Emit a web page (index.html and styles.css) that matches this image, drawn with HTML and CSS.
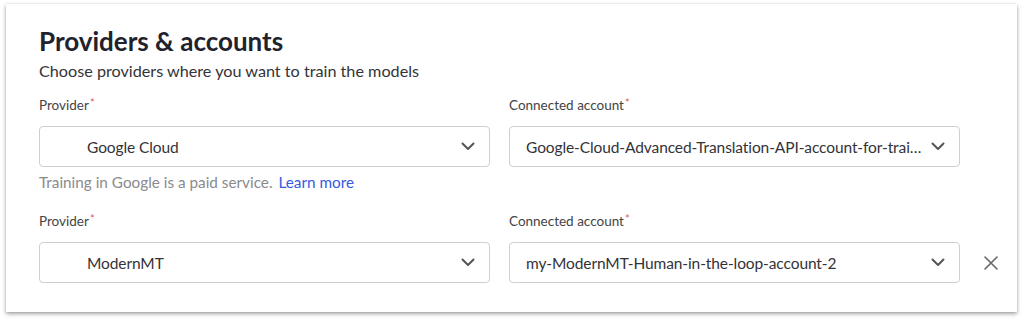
FILE: index.html
```html
<!DOCTYPE html>
<html>
<head>
    <meta charset="utf-8">
    <link rel="stylesheet" href="styles.css">
</head>
<body>
    <div class="card">
        <h1 class="title">Providers &amp; accounts</h1>
        <p class="subtitle">Choose providers where you want to train the models</p>

        <div class="rows">
            <div class="row">
                <div class="field">
                    <label class="label">Provider<span class="req">*</span></label>
                    <div class="select select-provider">
                        <span class="value">Google Cloud</span>
                        <svg class="chevron" width="14" height="9" viewBox="0 0 14 9"><path d="M1.5 1.5 L7 7 L12.5 1.5" fill="none" stroke="#555" stroke-width="2" stroke-linecap="round" stroke-linejoin="round"/></svg>
                    </div>
                    <div class="hint">Training in Google is a paid service. <a class="link" href="#">Learn more</a></div>
                </div>
                <div class="field">
                    <label class="label">Connected account<span class="req">*</span></label>
                    <div class="select">
                        <span class="value">Google-Cloud-Advanced-Translation-API-account-for-training-models</span>
                        <svg class="chevron" width="14" height="9" viewBox="0 0 14 9"><path d="M1.5 1.5 L7 7 L12.5 1.5" fill="none" stroke="#555" stroke-width="2" stroke-linecap="round" stroke-linejoin="round"/></svg>
                    </div>
                </div>
                <div class="remove"></div>
            </div>

            <div class="row">
                <div class="field">
                    <label class="label">Provider<span class="req">*</span></label>
                    <div class="select select-provider">
                        <span class="value">ModernMT</span>
                        <svg class="chevron" width="14" height="9" viewBox="0 0 14 9"><path d="M1.5 1.5 L7 7 L12.5 1.5" fill="none" stroke="#555" stroke-width="2" stroke-linecap="round" stroke-linejoin="round"/></svg>
                    </div>
                </div>
                <div class="field">
                    <label class="label">Connected account<span class="req">*</span></label>
                    <div class="select">
                        <span class="value">my-ModernMT-Human-in-the-loop-account-2</span>
                        <svg class="chevron" width="14" height="9" viewBox="0 0 14 9"><path d="M1.5 1.5 L7 7 L12.5 1.5" fill="none" stroke="#555" stroke-width="2" stroke-linecap="round" stroke-linejoin="round"/></svg>
                    </div>
                </div>
                <div class="remove">
                    <svg width="14" height="14" viewBox="0 0 14 14"><path d="M1 1 L13 13 M13 1 L1 13" stroke="#666" stroke-width="1.6" stroke-linecap="round"/></svg>
                </div>
            </div>
        </div>
    </div>
</body>
</html>
```

FILE: styles.css
```css
:root {
    --radius: 4px;
    --border: #cfcfd3;
    --text: #333338;
}

html, body {
    height: 321px;
}

body {
    margin: 0;
    padding-top: 4px;
    box-sizing: border-box;
    background-color: white;
    font-family: Lato, "Open Sans", sans-serif;
    color: var(--text);
}

.card {
    margin: 0 7px 0 6px;
    height: 308px;
    box-sizing: border-box;
    padding: 21px 33px 0 33px;
    background-color: white;
    box-shadow: 0 2px 4px rgba(0, 0, 0, 0.35), 0 0 2px rgba(0, 0, 0, 0.12);
}

.title {
    margin: 0;
    font-size: 26px;
    line-height: 32px;
    font-weight: 700;
    color: #22222c;
}

.subtitle {
    margin: 3px 0 0 0;
    font-size: 16.2px;
    line-height: 22px;
}

.rows {
    margin-top: 13px;
    display: flex;
    flex-direction: column;
    gap: 19px;
}

.row {
    display: grid;
    grid-template-columns: 451px 451px 50px;
    column-gap: 19px;
}

.label {
    display: block;
    font-size: 13.5px;
    line-height: 20px;
    color: #444;
    margin-bottom: 11px;
}

.req {
    color: #e05a5a;
    font-size: 11px;
    vertical-align: top;
    margin-left: 1px;
    position: relative;
    top: -2px;
}

.select {
    height: 41px;
    box-sizing: border-box;
    border: 1px solid var(--border);
    border-radius: var(--radius);
    display: flex;
    align-items: center;
    padding: 0 14px 0 16px;
    font-size: 15.5px;
}

.select-provider {
    padding-left: 47px;
}

.value {
    flex: 1;
    white-space: nowrap;
    overflow: hidden;
    text-overflow: ellipsis;
    padding-right: 8px;
    letter-spacing: -0.1px;
}

.chevron {
    flex: none;
}

.hint {
    margin-top: 5px;
    font-size: 15.3px;
    line-height: 20px;
    color: #8a8a8e;
}

.link {
    color: #3858e0;
    text-decoration: none;
    margin-left: 2px;
}

.remove {
    display: flex;
    align-items: center;
    padding-left: 5px;
    height: 41px;
    margin-top: 31px;
}
```
